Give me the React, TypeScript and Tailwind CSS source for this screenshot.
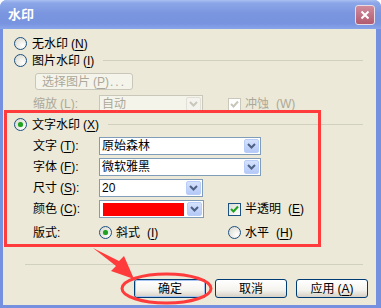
import type { ReactNode } from "react";

const FONT = "font-['Liberation_Sans','Noto_Sans_CJK_SC',sans-serif]";

function Key({ k }: { k: string }) {
  return (
    <span className="ml-[3px]">
      (<span className="underline underline-offset-2">{k}</span>)
    </span>
  );
}

function Radio({ checked = false }: { checked?: boolean }) {
  return (
    <span className="relative flex h-[13px] w-[13px] shrink-0 items-center justify-center rounded-full border border-[#1c5180] bg-[radial-gradient(circle_at_70%_70%,#ffffff_0%,#e6e5de_60%,#d4d3ca_100%)]">
      {checked && <span className="h-[5px] w-[5px] rounded-full bg-[#21a121] shadow-[0_0_1px_#5fd35f]" />}
    </span>
  );
}

function Check({ disabled = false }: { disabled?: boolean }) {
  return (
    <span
      className={`flex h-[13px] w-[13px] shrink-0 items-center justify-center border ${
        disabled ? "border-[#cac8bb] bg-white" : "border-[#1c5180] bg-[linear-gradient(135deg,#dcdcd7,#ffffff)]"
      }`}
    >
      <svg width="9" height="9" viewBox="0 0 9 9">
        <path d="M1 4 L3.5 6.5 L8 1.5" fill="none" stroke={disabled ? "#c8c6b8" : "#21a121"} strokeWidth="2" />
      </svg>
    </span>
  );
}

function DropBtn({ disabled = false }: { disabled?: boolean }) {
  return (
    <span
      className={`m-[1px] flex w-[15px] items-center justify-center rounded-[2px] border ${
        disabled ? "border-[#e2e0d6] bg-[#f4f3ee]" : "border-[#b9cdf9] bg-[linear-gradient(180deg,#d5e2fd,#b5c9f7)]"
      }`}
    >
      <svg width="9" height="6" viewBox="0 0 9 6">
        <path d="M1 1 L4.5 4.5 L8 1" fill="none" stroke={disabled ? "#c9c7ba" : "#4d6185"} strokeWidth="2" />
      </svg>
    </span>
  );
}

function Combo({ w, children, disabled = false }: { w: string; children: ReactNode; disabled?: boolean }) {
  return (
    <div
      className={`flex h-[18px] ${w} border ${disabled ? "border-[#c9c7ba] bg-[#f5f4ea] text-[#aca899]" : "border-[#7f9db9] bg-white text-black"}`}
    >
      <div className="flex flex-1 items-center overflow-hidden pl-[2px]">{children}</div>
      <DropBtn disabled={disabled} />
    </div>
  );
}

function XpButton({ label, def = false }: { label: ReactNode; def?: boolean }) {
  return (
    <button className="h-[19px] w-[72px] rounded-[3px] border border-[#003c74] bg-[linear-gradient(180deg,#ffffff_0%,#f4f3ee_60%,#d6d0c5_100%)] p-0">
      <span
        className={`flex h-full w-full items-center justify-center rounded-[2px] text-[12px] leading-none ${
          def ? "border border-[#a7c3f2]" : ""
        }`}
      >
        {label}
      </span>
    </button>
  );
}

export default function App() {
  return (
    <div className={`relative flex h-[308px] w-[381px] flex-col rounded-t-[7px] bg-[#7590df] text-[12px] text-black ${FONT}`}>
      {/* title bar */}
      <div className="flex h-[29px] items-center justify-between rounded-t-[7px] bg-[linear-gradient(180deg,#a9c0f1_0%,#8ca7e8_10%,#7b96df_45%,#7893df_80%,#88a4ea_100%)] pl-[8px] pr-[6px]">
        <span className="text-[13px] font-bold text-white">水印</span>
        <span className="flex h-[20px] w-[20px] items-center justify-center rounded-[3px] border border-[#e8dde5] bg-[linear-gradient(180deg,#d08c9c,#b25a70)]">
          <svg width="10" height="10" viewBox="0 0 10 10">
            <path d="M1.5 1.5 L8.5 8.5 M8.5 1.5 L1.5 8.5" stroke="white" strokeWidth="2" />
          </svg>
        </span>
      </div>

      {/* body */}
      <div className="relative mb-[3px] ml-[3px] mr-[5px] flex flex-1 flex-col bg-[#ece9d8]">
        <div className="ml-[11px] mt-[6px] flex h-[17px] items-center gap-[5px]">
          <Radio />
          <span>无水印<Key k="N" /></span>
        </div>
        <div className="ml-[11px] mr-[13px] flex h-[17px] items-center gap-[5px]">
          <Radio />
          <span>图片水印<Key k="I" /></span>
          <span className="ml-[4px] h-0 flex-1 border-t border-[#d0d0bf]" />
        </div>
        <div className="ml-[32px] mt-[4px] flex h-[17px] w-[98px] items-center rounded-[3px] border border-[#c9c7ba] bg-[#f5f4ea] pl-[6px] text-[#aca899]">
          选择图片<Key k="P" /><span className="ml-[1px] tracking-[2px]">...</span>
        </div>
        <div className="mt-[5px] flex h-[18px] items-center">
          <span className="ml-[30px] w-[66px] text-[#aca899]">
            缩放<Key k="L" />:
          </span>
          <Combo w="w-[104px]" disabled>
            自动
          </Combo>
          <span className="ml-[25px] flex items-center gap-[4px] text-[#aca899]">
            <Check disabled />
            冲蚀<Key k="W" />
          </span>
        </div>

        <div className="ml-[11px] mr-[13px] mt-[3px] flex h-[17px] items-center gap-[5px]">
          <Radio checked />
          <span>文字水印<Key k="X" /></span>
          <span className="ml-[4px] h-0 flex-1 border-t border-[#d0d0bf]" />
        </div>
        <div className="mt-[4px] flex h-[18px] items-center">
          <span className="ml-[30px] w-[66px]">
            文字<Key k="T" />:
          </span>
          <Combo w="w-[162px]">原始森林</Combo>
        </div>
        <div className="mt-[3px] flex h-[18px] items-center">
          <span className="ml-[30px] w-[66px]">
            字体<Key k="F" />:
          </span>
          <Combo w="w-[162px]">微软雅黑</Combo>
        </div>
        <div className="mt-[3px] flex h-[18px] items-center">
          <span className="ml-[30px] w-[66px]">
            尺寸<Key k="S" />:
          </span>
          <Combo w="w-[104px]">20</Combo>
        </div>
        <div className="mt-[3px] flex h-[18px] items-center">
          <span className="ml-[30px] w-[66px]">
            颜色<Key k="C" />:
          </span>
          <Combo w="w-[105px]">
            <span className="ml-[1px] h-[13px] w-[81px] bg-[#ff0000]" />
          </Combo>
          <span className="ml-[24px] flex items-center gap-[4px]">
            <Check />
            半透明<Key k="E" />
          </span>
        </div>
        <div className="mt-[6px] flex h-[17px] items-center">
          <span className="ml-[30px] w-[66px]">版式:</span>
          <span className="flex w-[129px] items-center gap-[4px]">
            <Radio checked />
            斜式<Key k="I" />
          </span>
          <span className="flex items-center gap-[4px]">
            <Radio />
            水平<Key k="H" />
          </span>
        </div>

        <div className="ml-[22px] mr-[13px] mt-[23px] border-t border-[#d0d0bf]" />

        <div className="mt-[14px] flex justify-end gap-[9px] pr-[8px]">
          <XpButton label="确定" def />
          <XpButton label="取消" />
          <XpButton label={<>应用<Key k="A" /></>} />
        </div>

        {/* red annotation frame */}
        <div className="pointer-events-none absolute left-[1px] top-[81px] h-[137px] w-[317px] border-[3px] border-[#ff3b3b]" />
      </div>

      {/* annotation: arrow + ellipse */}
      <svg className="pointer-events-none absolute left-0 top-0" width="381" height="308" viewBox="0 0 381 308">
        <ellipse cx="166.5" cy="288.5" rx="44.5" ry="14.5" fill="none" stroke="#ff3b3b" strokeWidth="3" />
        <path d="M93 248 L119 261 L124 256 L134 279 L111 271 L116 266 Z" fill="#ff3b3b" />
      </svg>
    </div>
  );
}
